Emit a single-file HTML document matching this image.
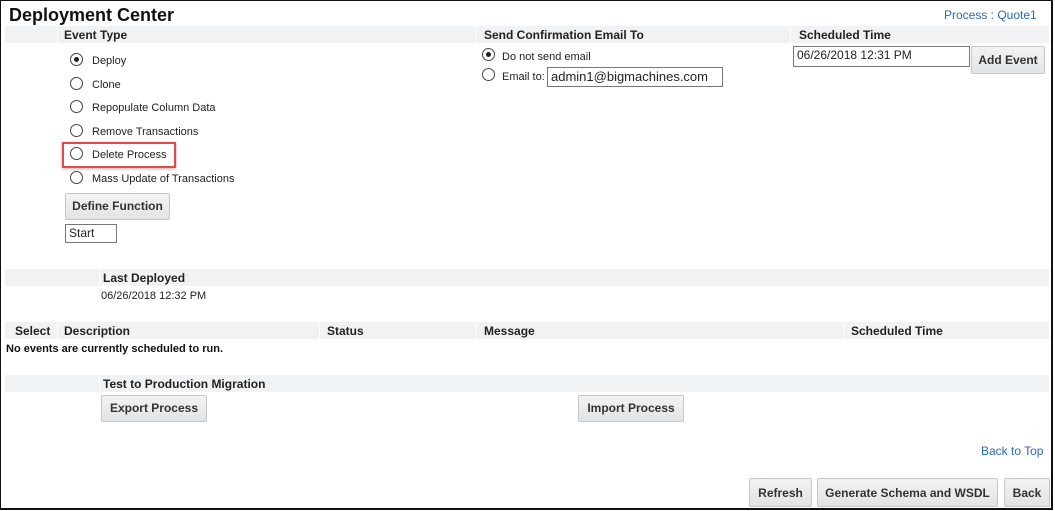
<!DOCTYPE html>
<html><head><style>
*{margin:0;padding:0;box-sizing:border-box}
body{width:1055px;height:511px;background:#fff;font-family:"Liberation Sans",Arial,sans-serif;color:#222;position:relative;overflow:hidden}
.frame{position:absolute;left:0;top:0;width:1053px;height:510px;border:1px solid #111;border-right-width:2px;border-bottom-width:2px}
.a{position:absolute;white-space:nowrap}
.band{position:absolute;left:5px;width:1044px;height:17px;background:#f1f2f4}
.sep{position:absolute;top:0;width:1px;height:17px;background:#fff}
.h{font-size:12px;font-weight:bold;color:#222}
.s{font-size:11px;color:#222}
.r{position:absolute;width:13px;height:13px;border:1px solid #444;border-radius:50%;background:#fff}
.r.on::after{content:"";position:absolute;left:3px;top:3px;width:5px;height:5px;border-radius:50%;background:#222}
.btn{position:absolute;height:27px;background:linear-gradient(#f2f3f4,#e1e3e5);border:1px solid #c5c8cb;border-radius:2px;font-size:12px;font-weight:bold;color:#333;text-align:center;line-height:25px}
.in{position:absolute;border:1px solid #777;background:#fff;font-size:12px;padding-left:3px;line-height:17px;height:19px}
a{color:#2a6ab5;text-decoration:none;font-size:12px}
</style></head><body>
<div class="frame"></div>
<div class="a" style="left:9px;top:5px;font-size:18px;font-weight:bold;color:#111">Deployment Center</div>
<a class="a" style="left:944px;top:8px">Process : Quote1</a>

<div class="band" style="top:26px"><div class="sep" style="left:52px"></div><div class="sep" style="left:470px"></div><div class="sep" style="left:785px"></div></div>
<div class="a h" style="left:64px;top:28px">Event Type</div>
<div class="a h" style="left:484px;top:28px">Send Confirmation Email To</div>
<div class="a h" style="left:799px;top:28px">Scheduled Time</div>

<div class="r on" style="left:70px;top:53px"></div><div class="a s" style="left:92px;top:55px">Deploy</div>
<div class="r" style="left:70px;top:77px"></div><div class="a s" style="left:92px;top:79px">Clone</div>
<div class="r" style="left:70px;top:100px"></div><div class="a s" style="left:92px;top:102px">Repopulate Column Data</div>
<div class="r" style="left:70px;top:124px"></div><div class="a s" style="left:92px;top:126px">Remove Transactions</div>
<div class="r" style="left:70px;top:147px"></div><div class="a s" style="left:92px;top:149px">Delete Process</div>
<div class="a" style="left:62px;top:142px;width:114px;height:26px;border:2px solid #e8474a;box-shadow:0 1px 3px rgba(0,0,0,.3)"></div>
<div class="r" style="left:70px;top:171px"></div><div class="a s" style="left:92px;top:173px">Mass Update of Transactions</div>
<div class="btn" style="left:65px;top:193px;width:105px">Define Function</div>
<div class="in" style="left:65px;top:224px;width:52px">Start</div>

<div class="r on" style="left:482px;top:48px"></div><div class="a s" style="left:502px;top:51px">Do not send email</div>
<div class="r" style="left:482px;top:68px"></div><div class="a s" style="left:502px;top:71px">Email to:</div>
<div class="in" style="left:547px;top:67px;width:176px;height:20px;font-size:13px">admin1@bigmachines.com</div>
<div class="in" style="left:793px;top:46px;width:177px;height:21px">06/26/2018 12:31 PM</div>
<div class="btn" style="left:971px;top:46px;width:74px;height:28px;line-height:27px">Add Event</div>

<div class="band" style="top:269px"><div class="sep" style="left:94px"></div></div>
<div class="a h" style="left:103px;top:271px">Last Deployed</div>
<div class="a s" style="left:101px;top:290px">06/26/2018 12:32 PM</div>

<div class="band" style="top:322px"><div class="sep" style="left:52px"></div><div class="sep" style="left:314px"></div><div class="sep" style="left:470px"></div><div class="sep" style="left:838px"></div></div>
<div class="a h" style="left:15px;top:324px">Select</div>
<div class="a h" style="left:64px;top:324px">Description</div>
<div class="a h" style="left:327px;top:324px">Status</div>
<div class="a h" style="left:484px;top:324px">Message</div>
<div class="a h" style="left:851px;top:324px">Scheduled Time</div>
<div class="a" style="left:6px;top:343px;font-size:11px;font-weight:bold;color:#111">No events are currently scheduled to run.</div>

<div class="band" style="top:375px"><div class="sep" style="left:94px"></div></div>
<div class="a h" style="left:103px;top:377px">Test to Production Migration</div>
<div class="btn" style="left:101px;top:395px;width:106px">Export Process</div>
<div class="btn" style="left:578px;top:395px;width:106px">Import Process</div>

<a class="a" style="left:981px;top:444px">Back to Top</a>
<div class="btn" style="left:749px;top:478px;width:63px;height:29px;line-height:28px">Refresh</div>
<div class="btn" style="left:817px;top:478px;width:181px;height:29px;line-height:28px">Generate Schema and WSDL</div>
<div class="btn" style="left:1004px;top:478px;width:46px;height:29px;line-height:28px">Back</div>
</body></html>
